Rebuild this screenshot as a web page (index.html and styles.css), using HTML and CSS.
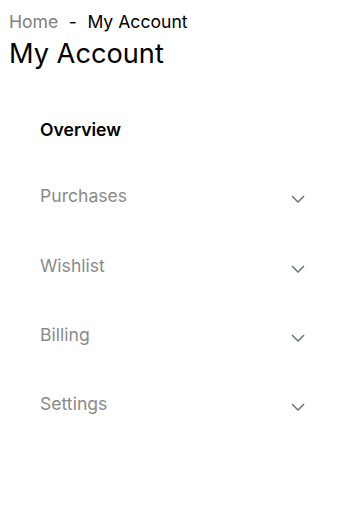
FILE: index.html
```html
<!DOCTYPE html>
<html>
<head>
<meta charset="utf-8">
<link rel="stylesheet" href="styles.css">
</head>
<body>
<nav class="crumbs"><span class="crumb-link">Home</span><span class="sep">-</span><span class="crumb-current">My Account</span></nav>
<h1 class="title">My Account</h1>
<ul class="menu">
  <li class="item active"><span>Overview</span></li>
  <li class="item"><span>Purchases</span><svg class="chev" viewBox="0 0 14 8" width="14" height="8"><path d="M1 1l6 6 6-6" fill="none" stroke="#6b7280" stroke-width="1.5"/></svg></li>
  <li class="item"><span>Wishlist</span><svg class="chev" viewBox="0 0 14 8" width="14" height="8"><path d="M1 1l6 6 6-6" fill="none" stroke="#6b7280" stroke-width="1.5"/></svg></li>
  <li class="item"><span>Billing</span><svg class="chev" viewBox="0 0 14 8" width="14" height="8"><path d="M1 1l6 6 6-6" fill="none" stroke="#6b7280" stroke-width="1.5"/></svg></li>
  <li class="item"><span>Settings</span><svg class="chev" viewBox="0 0 14 8" width="14" height="8"><path d="M1 1l6 6 6-6" fill="none" stroke="#6b7280" stroke-width="1.5"/></svg></li>
</ul>
</body>
</html>
```
FILE: styles.css
```css
body {
  margin: 8px 9px;
  font-family: Inter, "Noto Sans", sans-serif;
  color: #000;
  background: #fff;
}
.crumbs {
  font-size: 17.6px;
  line-height: 28px;
  display: flex;
}
.crumb-link { color: #808080; }
.sep { color: #000; margin: 0 10.5px; }
.crumb-current { color: #000; }
.title {
  font-size: 27.2px;
  font-weight: 400;
  line-height: 35px;
  margin: 0;
}
.menu {
  list-style: none;
  margin: 27.5px 0 0;
  padding: 0 25.5px 0 31px;
}
.item {
  display: flex;
  align-items: center;
  justify-content: space-between;
  height: 69.4px;
  font-size: 17.6px;
  color: #8a8a8a;
}
.item.active {
  height: 62.5px;
  color: #000;
  font-weight: 600;
}
.chev { margin-top: 7px; }
```
